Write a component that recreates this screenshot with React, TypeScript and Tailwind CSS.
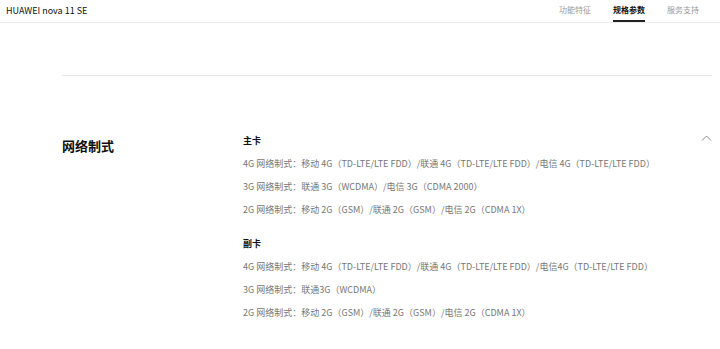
const main = [
  "4G 网络制式：移动 4G（TD-LTE/LTE FDD）/联通 4G（TD-LTE/LTE FDD）/电信 4G（TD-LTE/LTE FDD）",
  "3G 网络制式：联通 3G（WCDMA）/电信 3G（CDMA 2000）",
  "2G 网络制式：移动 2G（GSM）/联通 2G（GSM）/电信 2G（CDMA 1X）",
];

const sub = [
  "4G 网络制式：移动 4G（TD-LTE/LTE FDD）/联通 4G（TD-LTE/LTE FDD）/电信4G（TD-LTE/LTE FDD）",
  "3G 网络制式：联通3G（WCDMA）",
  "2G 网络制式：移动 2G（GSM）/联通 2G（GSM）/电信 2G（CDMA 1X）",
];

const tabs = [
  { label: "功能特征", active: false },
  { label: "规格参数", active: true },
  { label: "服务支持", active: false },
];

const CardBlock = ({ title, rows, className = "" }: { title: string; rows: string[]; className?: string }) => (
  <div className={className}>
    <div className="h-[22px] flex items-center text-[9px] font-bold text-[#111]">{title}</div>
    {rows.map((r, i) => (
      <div key={i} className="h-[23px] flex items-center text-[9px] text-[#777] whitespace-nowrap">
        {r}
      </div>
    ))}
  </div>
);

export default function App() {
  return (
    <div
      className="w-[720px] h-[349px] bg-white overflow-hidden"
      style={{ fontFamily: '"Noto Sans CJK SC", "Noto Sans", sans-serif' }}
    >
      {/* top bar */}
      <div className="h-[23px] flex items-stretch justify-between border-b border-[#ececec] pl-[6px] pr-[21px]">
        <div className="flex items-center text-[9px] text-[#111]">HUAWEI nova 11 SE</div>
        <div className="flex items-stretch gap-[22px]">
          {tabs.map((t) => (
            <div
              key={t.label}
              className={`flex items-center text-[8px] border-b-2 ${
                t.active ? "border-[#222] font-bold text-[#111]" : "border-transparent text-[#9a9a9a]"
              }`}
            >
              {t.label}
            </div>
          ))}
        </div>
      </div>

      <div className="pl-[62px] pr-[8px]">
        <div className="mt-[52px] border-t border-[#e6e6e6]" />

        <div className="flex pt-[54px]">
          <div className="w-[181px] shrink-0 pt-[5px] text-[13px] leading-[22px] font-bold text-[#111]">网络制式</div>
          <div className="flex-1">
            <CardBlock title="主卡" rows={main} />
            <CardBlock title="副卡" rows={sub} className="mt-[12px]" />
          </div>
          <div className="pt-[4px]">
            <svg width="11" height="8" viewBox="0 0 11 8" fill="none">
              <path d="M1 6.5 L5.5 2 L10 6.5" stroke="#8a8a8a" strokeWidth="1" />
            </svg>
          </div>
        </div>
      </div>
    </div>
  );
}
